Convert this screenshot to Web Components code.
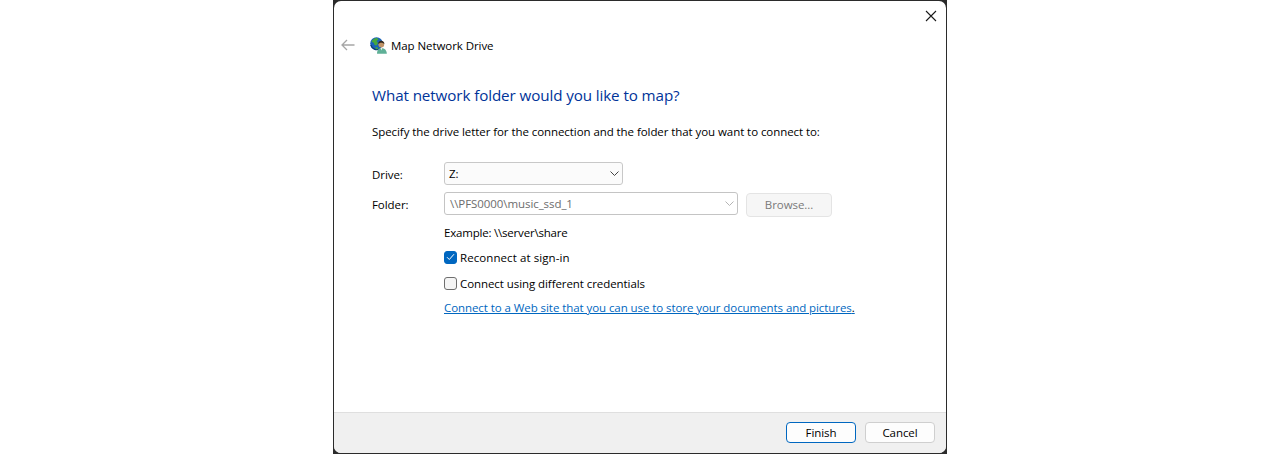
<!DOCTYPE html>
<html lang="en">
<head>
<meta charset="utf-8">
<title>Map Network Drive</title>
<style>
  html, body { margin: 0; height: 100%; background: #fff; overflow: hidden; }
  body { display: flex; justify-content: center; font: 11.5px "Open Sans", "Noto Sans", sans-serif; letter-spacing: -.07px; color: #000; }
</style>
</head>
<body>
<wizard-window>
  <wizard-header slot="header" caption="Map Network Drive"></wizard-header>
  <h-title>What network folder would you like to map?</h-title>
  <drive-form></drive-form>
  <push-button slot="footer" default>Finish</push-button>
  <push-button slot="footer">Cancel</push-button>
</wizard-window>

<script>
class WizardWindow extends HTMLElement {
  constructor() {
    super();
    this.attachShadow({ mode: 'open' }).innerHTML = `
      <style>
        :host { display: block; width: 614px; height: 454px; box-sizing: border-box; background: #2b2b2b; }
        .frame { box-sizing: border-box; height: 100%; margin: 0; border: 1px solid #2b2b2b; }
        .inner { height: 100%; background: #fff; border-radius: 7px; display: flex; flex-direction: column; overflow: hidden; }
        .close { height: 30px; display: flex; justify-content: flex-end; padding: 9px 9px 0 0; box-sizing: border-box; flex: none; }
        .close svg { display: block; }
        main { flex: 1; padding: 0 0 0 38px; }
        footer { flex: none; box-sizing: border-box; height: 41px; background: #f0f0f0; border-top: 1px solid #dfdfdf; display: flex; justify-content: flex-end; gap: 9px; padding: 9px 11px 0 0; }
      </style>
      <div class="frame"><div class="inner">
        <div class="close"><svg width="12" height="12" viewBox="0 0 12 12"><path d="M1 1 11 11M11 1 1 11" stroke="#1a1a1a" stroke-width="1.1" fill="none"/></svg></div>
        <slot name="header"></slot>
        <main><slot></slot></main>
        <footer><slot name="footer"></slot></footer>
      </div></div>`;
  }
}

class WizardHeader extends HTMLElement {
  constructor() {
    super();
    this.attachShadow({ mode: 'open' }).innerHTML = `
      <style>
        :host { display: flex; align-items: center; height: 28px; padding-left: 7px; }
        .back { width: 14px; height: 12px; margin-right: 15px; }
        .icon { width: 17px; height: 17px; margin-right: 4px; }
      </style>
      <svg class="back" viewBox="0 0 14 12"><path d="M13.5 6H1M6 1 1 6l5 5" stroke="#a6a6a6" stroke-width="1.3" fill="none"/></svg>
      <svg class="icon" viewBox="0 0 17 17">
        <circle cx="6.500" cy="6.500" r="6.300" fill="#1a63b8"/>
        <path d="M1.500 4.500C3 2 5 .8 7 1l1.500 1.500-2 1.500 1.500 2-1.500 2.500-2-.5-.5-2z" fill="#46a83c"/>
        <path d="M5 10.500l2.500-.5.500 2.500-1.500.3z" fill="#46a83c"/>
        <path d="M.8 8a6.300 6.300 0 0 0 9 4" stroke="#0c3a73" stroke-width="1.200" fill="none"/>
        <path d="M7 16.800c0-3.500 1.500-5.800 4.500-5.800s5.300 2.300 5.300 5.800z" fill="#5fb097"/>
        <path d="M10.500 11l1 2.500 1-2.500z" fill="#e8f0ea"/>
        <circle cx="11.300" cy="7.600" r="2.900" fill="#c09468"/>
        <path d="M8.200 7.200C8 5 9.500 3.800 11.300 3.800s3.300 1.200 3.100 3.400c-.8-1-1.800-1.500-3.100-1.500s-2.300.5-3.100 1.500z" fill="#33281d"/>
      </svg>
      <span></span>`;
  }
  connectedCallback() {
    this.shadowRoot.querySelector('span').textContent = this.getAttribute('caption');
  }
}

class HTitle extends HTMLElement {
  constructor() {
    super();
    this.attachShadow({ mode: 'open' }).innerHTML = `
      <style>
        :host { display: block; margin-top: 24px; height: 24px; line-height: 24px; font-size: 15.200px; color: #003399; letter-spacing: -.1px; }
      </style>
      <slot></slot>`;
  }
}

class ComboBox extends HTMLElement {
  constructor() {
    super();
    this.attachShadow({ mode: 'open' }).innerHTML = `
      <style>
        :host { display: flex; align-items: center; box-sizing: border-box; height: 23px; background: #fbfbfb; border: 1px solid #c8c8c8; border-radius: 3px; padding: 0 3px 0 4px; justify-content: space-between; }
        :host([disabled]) { color: #6d6d6d; background: #fff; border-color: #c4c4c4; padding-left: 5px; }
        svg { display: block; }
        :host([disabled]) path { stroke: #b4b4b4; }
      </style>
      <slot></slot>
      <svg width="9" height="5" viewBox="0 0 9 5"><path d="M.5.500 4.500 4.500 8.500.500" stroke="#444" fill="none"/></svg>`;
  }
}

class PushButton extends HTMLElement {
  constructor() {
    super();
    this.attachShadow({ mode: 'open' }).innerHTML = `
      <style>
        :host { display: flex; align-items: center; justify-content: center; box-sizing: border-box; width: 70px; height: 21px; background: #fdfdfd; border: 1px solid #cfcfcf; border-radius: 4px; }
        :host([default]) { border-color: #0067c0; }
        :host([disabled]) { color: #7a7a7a; background: #f6f6f6; border-color: #e4e4e4; width: 86px; height: 24px; margin-top: 1px; padding-bottom: 2px; }
      </style>
      <slot></slot>`;
  }
}

class CheckBox extends HTMLElement {
  constructor() {
    super();
    this.attachShadow({ mode: 'open' }).innerHTML = `
      <style>
        :host { display: flex; align-items: center; gap: 3px; height: 14px; }
        .box { width: 13px; height: 13px; box-sizing: border-box; border: 1px solid #6e6e6e; border-radius: 3px; background: #f5f5f5; display: flex; align-items: center; justify-content: center; }
        :host([checked]) .box { background: #0067c0; border-color: #0067c0; }
        svg { display: none; }
        :host([checked]) svg { display: block; }
      </style>
      <span class="box"><svg width="9" height="8" viewBox="0 0 9 8"><path d="M1 4.200 3.300 6.500 8 1.200" stroke="#fff" fill="none"/></svg></span>
      <slot></slot>`;
  }
}

class DriveForm extends HTMLElement {
  constructor() {
    super();
    this.attachShadow({ mode: 'open' }).innerHTML = `
      <style>
        :host { display: block; }
        .intro { margin-top: 16px; height: 17px; line-height: 17px; }
        .grid { display: grid; grid-template-columns: 72px auto; margin-top: 22px; row-gap: 7px; align-items: start; justify-content: start; }
        label { height: 23px; line-height: 25px; }
        .folder { display: flex; gap: 8px; align-items: flex-start; }
        .stack { margin-left: 72px; display: flex; flex-direction: column; }
        .example { margin-top: 7px; height: 17px; line-height: 17px; letter-spacing: -.2px; }
        .example + check-box { margin-top: 9px; letter-spacing: .08px; }
        check-box + check-box { margin-top: 12px; }
        a { margin-top: 9px; height: 17px; line-height: 17px; color: #0067c0; white-space: nowrap; }
        a span { color: #000; }
        #drive { width: 179px; }
        #folder { width: 294px; }
      </style>
      <div class="intro">Specify the drive letter for the connection and the folder that you want to connect to:</div>
      <div class="grid">
        <label>Drive:</label>
        <combo-box id="drive">Z:</combo-box>
        <label>Folder:</label>
        <div class="folder">
          <combo-box id="folder" disabled>\\\\PFS0000\\music_ssd_1</combo-box>
          <push-button disabled>Browse...</push-button>
        </div>
      </div>
      <div class="stack">
        <div class="example">Example: \\\\server\\share</div>
        <check-box checked>Reconnect at sign-in</check-box>
        <check-box>Connect using different credentials</check-box>
        <a href="#">Connect to a Web site that you can use to store your documents and pictures<span>.</span></a>
      </div>`;
  }
}

customElements.define('wizard-window', WizardWindow);
customElements.define('wizard-header', WizardHeader);
customElements.define('h-title', HTitle);
customElements.define('combo-box', ComboBox);
customElements.define('push-button', PushButton);
customElements.define('check-box', CheckBox);
customElements.define('drive-form', DriveForm);
</script>
</body>
</html>
